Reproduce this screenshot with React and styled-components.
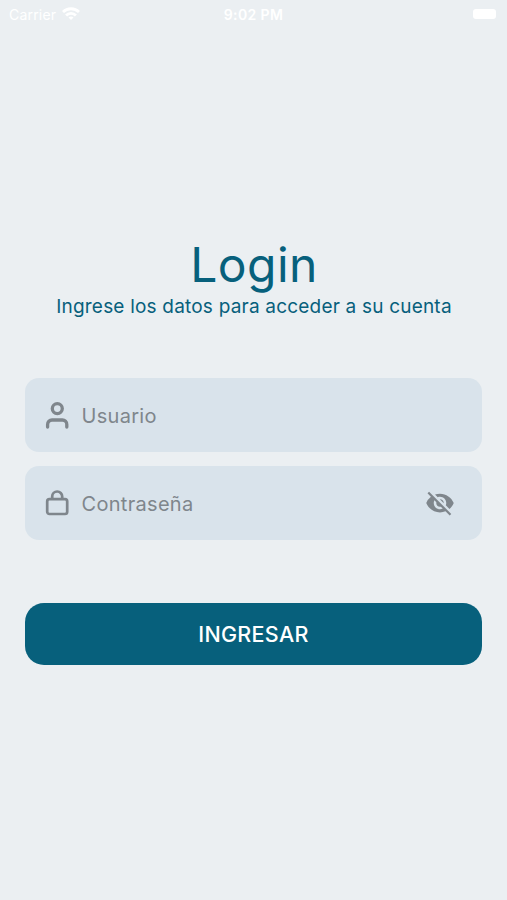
import React from "react";
import { MdVisibilityOff } from "react-icons/md";
import styled, { createGlobalStyle } from "styled-components";

const UserIcon = () => (
  <svg width="24" height="28" viewBox="0 0 24 28" fill="none" stroke="#7f868c" strokeWidth="3.3">
    <circle cx="12.3" cy="7.6" r="5" />
    <path d="M2.6 26V23.4a4.4 4.4 0 0 1 4.4-4.4h10.4a4.4 4.4 0 0 1 4.4 4.4v2.6" strokeLinecap="round" />
  </svg>
);

const LockIcon = () => (
  <svg width="24" height="28" viewBox="0 0 24 28" fill="none" stroke="#7f868c" strokeWidth="2.7">
    <rect x="2.2" y="10.2" width="20" height="14.8" rx="2.2" />
    <path d="M7.2 10.2V7.5a5 5 0 0 1 10 0v2.7" />
  </svg>
);

const WifiIcon = () => (
  <svg width="18" height="13" viewBox="0 0 18 13" fill="none" stroke="#ffffff" strokeWidth="2.8">
    <path d="M1 5a11.5 11.5 0 0 1 16 0" />
    <path d="M4.1 8.5a6.8 6.8 0 0 1 9.8 0" />
    <path d="M9 13L6.5 10.6a3.6 3.6 0 0 1 5 0z" fill="#ffffff" stroke="none" />
  </svg>
);

const App = () => {
  return (
    <Wrapper>
      <GlobalStyle />
      <StatusBar>
        <Carrier>
          Carrier
          <WifiIcon />
        </Carrier>
        <Time>9:02 PM</Time>
        <Battery />
      </StatusBar>
      <Header>
        <Title>Login</Title>
        <Subtitle>Ingrese los datos para acceder a su cuenta</Subtitle>
      </Header>
      <Form onSubmit={(e) => e.preventDefault()}>
        <Field>
          <UserIcon />
          <TextInput placeholder="Usuario" type="text" />
        </Field>
        <Field>
          <LockIcon />
          <TextInput placeholder="Contraseña" type="password" />
          <ToggleButton type="button" aria-label="Mostrar contraseña">
            <MdVisibilityOff />
          </ToggleButton>
        </Field>
        <SubmitButton type="submit">INGRESAR</SubmitButton>
      </Form>
    </Wrapper>
  );
};

const GlobalStyle = createGlobalStyle`
  * {
    box-sizing: border-box;
  }
  body {
    margin: 0;
    background: #ebeff2;
    font-family: Inter, "Liberation Sans", sans-serif;
  }
`;

const Wrapper = styled.div`
  height: 900px;
  display: flex;
  flex-direction: column;
  background: #ebeff2;
`;

const StatusBar = styled.div`
  height: 28px;
  padding: 0 11px 0 9px;
  display: grid;
  grid-template-columns: 1fr auto 1fr;
  align-items: center;
  color: #ffffff;
  font-size: 14px;
`;

const Carrier = styled.div`
  display: flex;
  align-items: center;
  gap: 6px;
  letter-spacing: 0.2px;
  svg {
    margin-top: -2px;
  }
`;

const Time = styled.div`
  padding-left: 2px;
  font-weight: 600;
  letter-spacing: 0.4px;
`;

const Battery = styled.div`
  justify-self: end;
  width: 23px;
  height: 10px;
  border-radius: 3px;
  background: #ffffff;
`;

const Header = styled.div`
  margin-top: 208px;
  text-align: center;
  color: #07607c;
`;

const Title = styled.h1`
  margin: 0;
  padding-left: 1px;
  font-size: 48px;
  font-weight: 400;
  line-height: 58px;
  letter-spacing: 0.4px;
`;

const Subtitle = styled.p`
  margin: 0;
  padding-left: 1px;
  font-size: 19px;
  line-height: 25px;
  letter-spacing: 0.2px;
`;

const Form = styled.form`
  margin-top: 59px;
  padding: 0 25px;
  display: flex;
  flex-direction: column;
  gap: 14px;
`;

const Field = styled.label`
  height: 74px;
  padding: 0 27px 0 20px;
  display: flex;
  align-items: center;
  border-radius: 14px;
  background: #d9e3eb;
`;

const TextInput = styled.input`
  flex: 1;
  min-width: 0;
  margin-left: 12.5px;
  padding: 1px 0 0;
  border: none;
  outline: none;
  background: transparent;
  font-family: inherit;
  font-size: 20px;
  line-height: 26px;
  letter-spacing: 0.3px;
  color: #7f868c;
  &::placeholder {
    color: #7f868c;
    opacity: 1;
  }
`;

const ToggleButton = styled.button`
  padding: 0;
  border: none;
  background: transparent;
  display: flex;
  color: #7f868c;
  font-size: 30px;
  cursor: pointer;
`;

const SubmitButton = styled.button`
  height: 62px;
  margin-top: 49px;
  border: none;
  border-radius: 19px;
  background: #07607c;
  color: #ffffff;
  font-family: inherit;
  font-size: 21.5px;
  font-weight: 500;
  letter-spacing: 0.3px;
  cursor: pointer;
`;

export default App;
